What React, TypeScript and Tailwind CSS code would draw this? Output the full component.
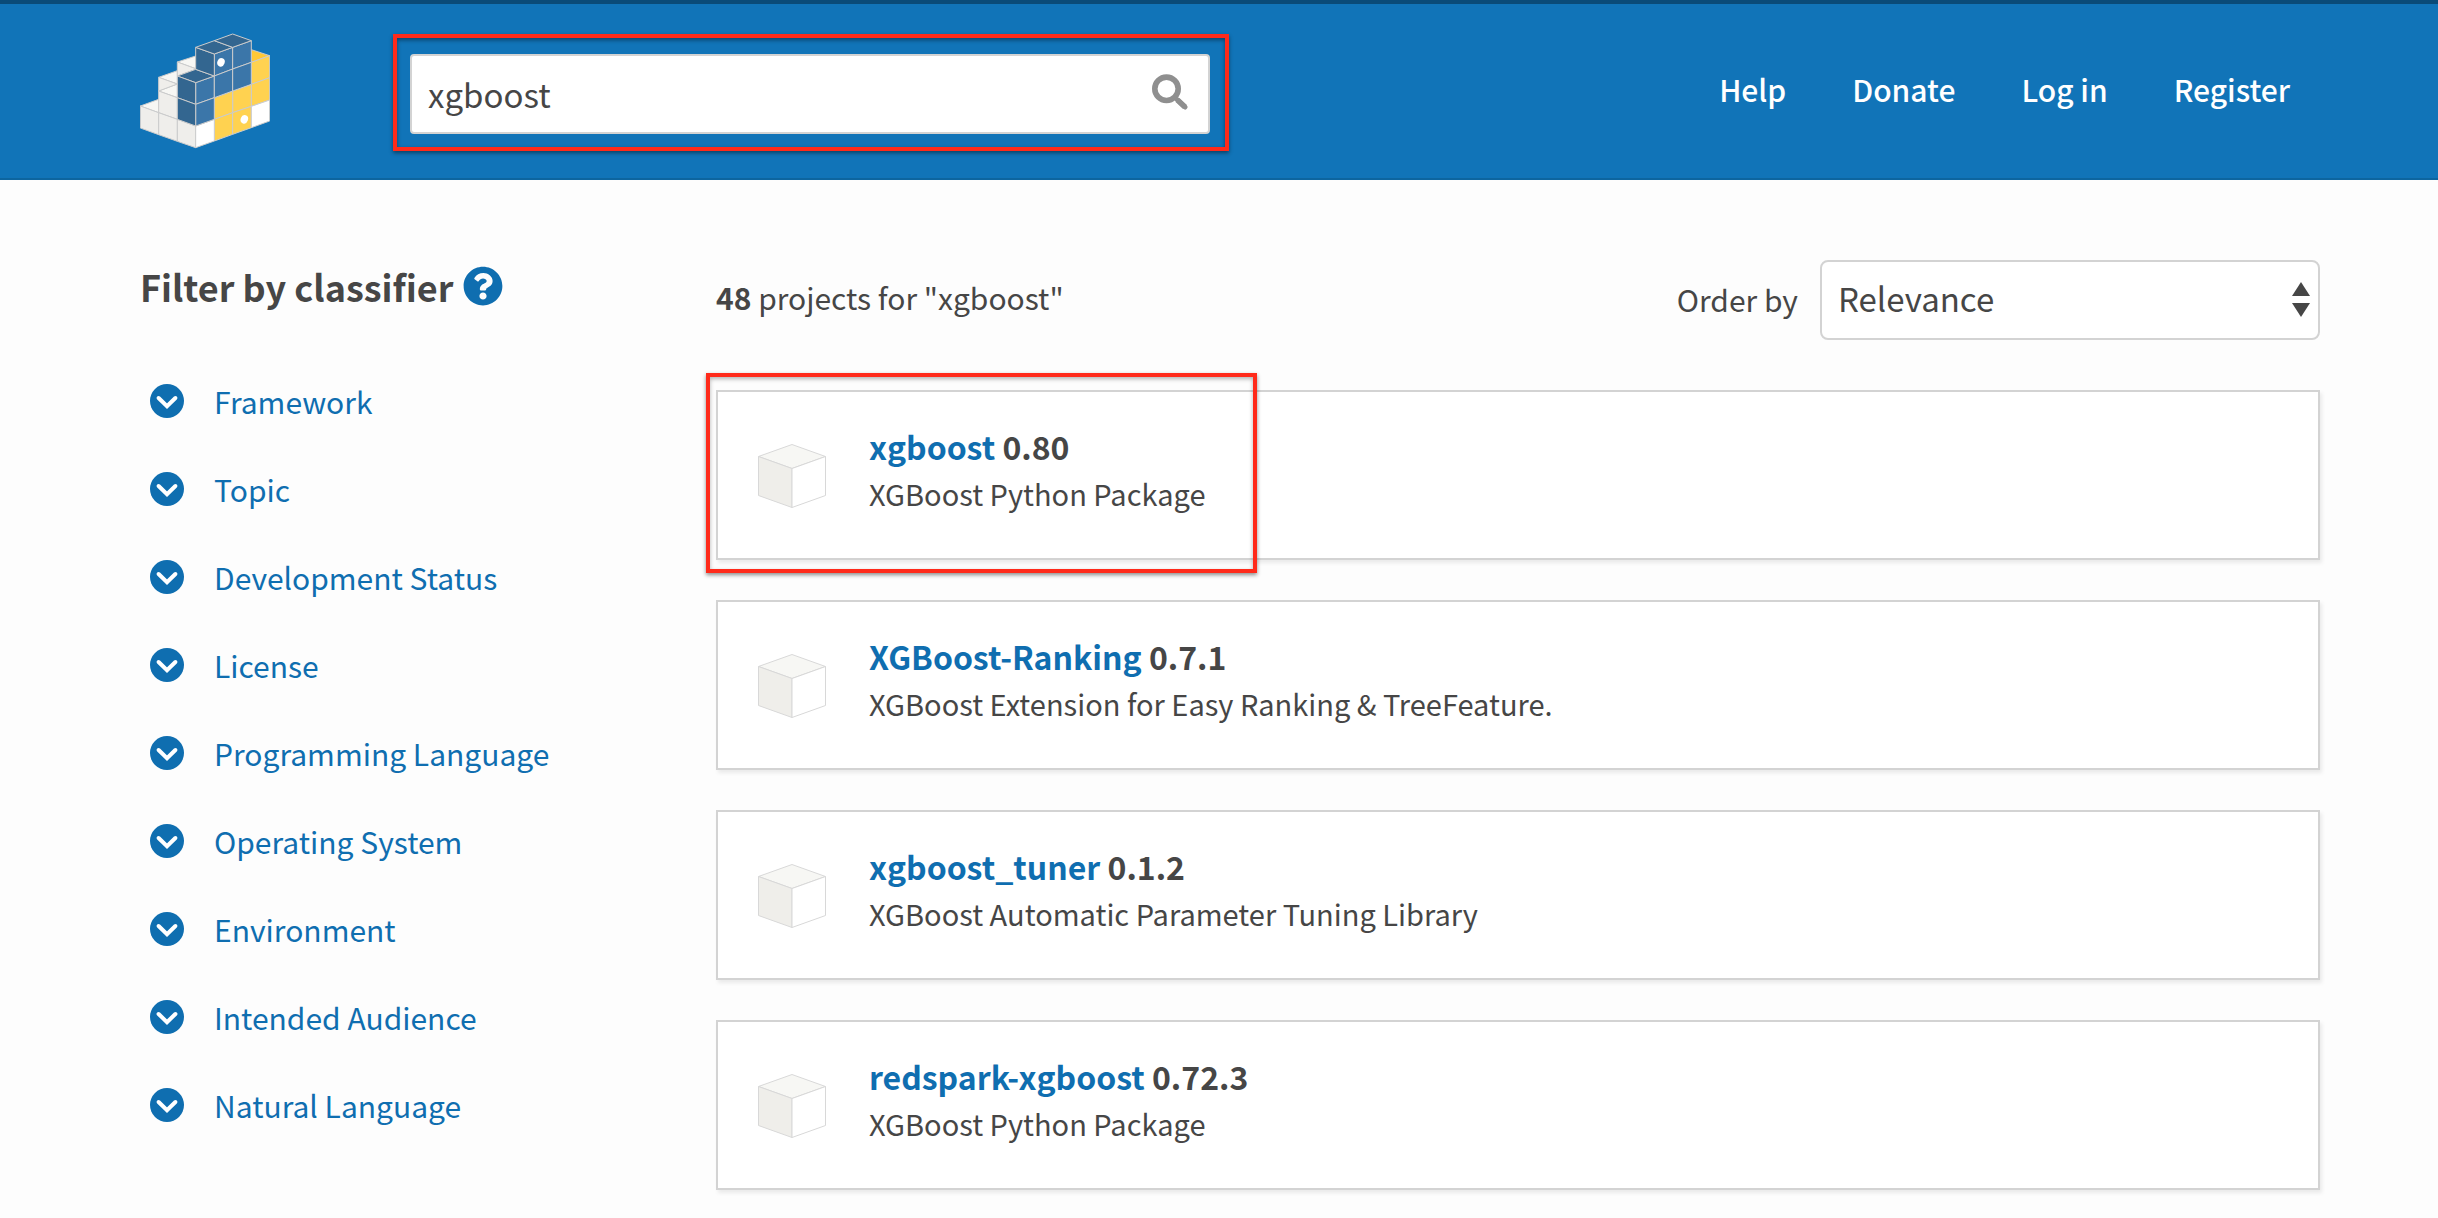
import React from "react";
import { FaQuestionCircle } from "react-icons/fa";

const navItems = ["Help", "Donate", "Log in", "Register"];

const classifiers = [
  "Framework",
  "Topic",
  "Development Status",
  "License",
  "Programming Language",
  "Operating System",
  "Environment",
  "Intended Audience",
  "Natural Language",
];

interface Project {
  name: string;
  version: string;
  description: string;
  highlighted?: boolean;
}

const projects: Project[] = [
  { name: "xgboost", version: "0.80", description: "XGBoost Python Package", highlighted: true },
  { name: "XGBoost-Ranking", version: "0.7.1", description: "XGBoost Extension for Easy Ranking & TreeFeature." },
  { name: "xgboost_tuner", version: "0.1.2", description: "XGBoost Automatic Parameter Tuning Library" },
  { name: "redspark-xgboost", version: "0.72.3", description: "XGBoost Python Package" },
];

function Logo() {
  return (
    <svg viewBox="60 99 390 348" className="h-[116px] w-[130px]" aria-hidden="true">
      <g stroke="#cccccc" strokeWidth="3" strokeLinejoin="round">
        {/* back steps */}
        <g fill="#f7f7f4">
          <path d="M172 186 227 168V206Z" />
          <path d="M116 232 172 212V252Z" />
          <path d="M116 273 172 252V293Z" />
          <path d="M61 318 116 298V338Z" />
        </g>
        <g fill="#efeeeb">
          <path d="M172 186 227 206V208L172 228Z" />
          <path d="M116 232 172 252 116 273Z" />
          <path d="M116 273 172 293V358L116 338Z" />
          <path d="M61 318 116 338V404L61 384Z" />
          <path d="M116 338 172 358V424L116 404Z" />
          <path d="M172 358 227 378V443L172 424Z" />
        </g>
        {/* yellow blocks */}
        <path d="M394 149 449 167 394 187Z" fill="#ffc836" />
        <g fill="#ffd250">
          <path d="M394 187 449 167V233L394 253Z" />
          <path d="M394 253 449 233V300L394 319Z" />
          <path d="M338 273 394 253V319L338 338Z" />
          <path d="M283 293 338 273V338L283 358Z" />
          <path d="M283 358 338 338V403L283 423Z" />
          <path d="M338 338 394 319V383L338 403Z" />
        </g>
        {/* white corners */}
        <g fill="#ffffff">
          <path d="M227 378 283 358V423L227 443Z" />
          <path d="M394 319 449 300V363L394 383Z" />
        </g>
        {/* blue blocks */}
        <g fill="#3b76a9">
          <path d="M227 248 283 228V293L227 313Z" />
          <path d="M227 313 283 293V358L227 378Z" />
          <path d="M283 162 338 142V207L283 228Z" />
          <path d="M338 142 394 122V187L338 207Z" />
          <path d="M283 228 338 207V273L283 293Z" />
          <path d="M338 207 394 187V253L338 273Z" />
        </g>
        <g fill="#336690">
          <path d="M172 228 227 208 283 228 227 248Z" />
          <path d="M172 228 227 248V313L172 293Z" />
          <path d="M172 293 227 313V378L172 358Z" />
          <path d="M227 142 283 162V228L227 208Z" />
          <path d="M227 142 283 122 338 142 283 162Z" />
          <path d="M283 122 338 102 394 122 338 142Z" />
        </g>
      </g>
      <ellipse cx="303" cy="187" rx="11" ry="13" fill="#fff" transform="rotate(20 303 187)" />
      <ellipse cx="373" cy="358" rx="11" ry="13" fill="#fff" transform="rotate(20 373 358)" />
    </svg>
  );
}

function SearchIcon() {
  return (
    <svg viewBox="0 0 36 36" className="size-9" fill="none" stroke="#8f8f8f" aria-hidden="true">
      <circle cx="14.5" cy="14.8" r="11.7" strokeWidth="5.6" />
      <path d="M25.5 26 33 33" strokeWidth="5.6" />
      <path d="M25.5 26 33 33" strokeWidth="5" strokeLinecap="round" />
    </svg>
  );
}

function ChevronIcon() {
  return (
    <svg viewBox="0 0 34 34" className="size-[34px] shrink-0" aria-hidden="true">
      <circle cx="17" cy="17" r="17" fill="#0f6eb0" />
      <path d="M8.6 14 17 22.2 25.4 14" fill="none" stroke="#fff" strokeWidth="4" strokeLinecap="round" />
    </svg>
  );
}

function PackageCube() {
  return (
    <svg viewBox="0 0 68 64" className="h-16 w-[68px] shrink-0" aria-hidden="true">
      <g stroke="#d8d8d8" strokeLinejoin="round">
        <path d="M.5 12.5 34 .5 67.5 12.5 34 24.5Z" fill="#f7f7f4" />
        <path d="M.5 12.5 34 24.5V63.5L.5 51.5Z" fill="#efeeea" />
        <path d="M67.5 12.5 34 24.5V63.5L67.5 51.5Z" fill="#fff" />
      </g>
    </svg>
  );
}

function ProjectCard({ name, version, description, highlighted }: Project) {
  return (
    <li className="relative flex min-h-[170px] items-center gap-[43px] border-2 border-[#d3d3d3] bg-white px-10 pt-0.5 shadow-[2px_3px_4px_rgba(0,0,0,0.08)]">
      <PackageCube />
      <div className="pb-3.5">
        <h3 className="text-[32px] leading-[48px] font-bold">
          <a href="#" className="text-[#0f6eb0]">{name}</a> {version}
        </h3>
        <p className="text-[29px] leading-[46px]">{description}</p>
      </div>
      {highlighted && (
        <div className="pointer-events-none absolute -top-[19px] -bottom-[15px] -left-3 w-[551px] border-4 border-[#ff2a1a] shadow-[0_2px_4px_rgba(0,0,0,0.45),inset_0_2px_4px_rgba(0,0,0,0.3)]" />
      )}
    </li>
  );
}

export default function App() {
  return (
    <div className="min-h-screen bg-[#fdfdfd] font-['Noto_Sans_CJK_SC',sans-serif] text-[#464646]">
      <header className="flex h-[180px] items-center border-t-4 border-b-2 border-t-[#0a4b78] border-b-[#0d659f] bg-[#1174b8] pr-[148px] pl-[140px]">
        <a href="#" aria-label="PyPI home">
          <Logo />
        </a>
        <form className="relative ml-[140px] w-[800px] pt-1.5" onSubmit={(e) => e.preventDefault()}>
          <input
            type="text"
            aria-label="Search projects"
            defaultValue="xgboost"
            className="block h-20 w-full rounded-sm border-2 border-[#d3d3d3] bg-white pr-20 pl-4 text-[33px] outline-none"
          />
          <button type="submit" aria-label="Search" className="absolute top-[26px] right-[22px]">
            <SearchIcon />
          </button>
          <div className="pointer-events-none absolute -top-3.5 -right-[19px] -bottom-[17px] -left-[17px] border-4 border-[#ff2a1a] shadow-[0_2px_4px_rgba(0,0,0,0.45),inset_0_2px_4px_rgba(0,0,0,0.45)]" />
        </form>
        <nav className="ml-auto flex gap-[66px] pb-1 text-[30px] leading-[44px] font-medium text-white">
          {navItems.map((item) => (
            <a key={item} href="#">{item}</a>
          ))}
        </nav>
      </header>

      <main className="flex pt-20 pr-[118px] pb-7 pl-[140px]">
        <aside className="w-[576px] shrink-0">
          <h2 className="flex h-[52px] items-center gap-2.5 text-[36px] leading-[52px] font-bold">
            Filter by classifier
            <a href="#" aria-label="Help with classifiers" className="text-[#0f6eb0]">
              <FaQuestionCircle className="size-10" />
            </a>
          </h2>
          <ul className="mt-[45px]">
            {classifiers.map((label) => (
              <li key={label}>
                <button type="button" className="flex h-[88px] items-center gap-[30px] pl-2.5 text-[30px] text-[#0f6eb0]">
                  <ChevronIcon />
                  {label}
                </button>
              </li>
            ))}
          </ul>
        </aside>

        <section className="min-w-0 flex-1">
          <div className="flex items-center justify-between">
            <p className="pb-1.5 text-[30px] leading-[44px]">
              <strong>48</strong> projects for "xgboost"
            </p>
            <div className="flex items-center gap-[22px]">
              <label htmlFor="order" className="pb-0.5 text-[30px] leading-[44px]">Order by</label>
              <div className="relative">
                <select
                  id="order"
                  className="block h-20 w-[500px] appearance-none rounded-lg border-2 border-[#d3d3d3] bg-white px-4 pb-0.5 text-[33px]"
                >
                  <option>Relevance</option>
                </select>
                <svg viewBox="0 0 18 36" className="pointer-events-none absolute top-[22px] right-2.5 h-9 w-[18px]" fill="#464646" aria-hidden="true">
                  <path d="M9 0 18 14H0Z" />
                  <path d="M9 35 18 21H0Z" />
                </svg>
              </div>
            </div>
          </div>
          <ul className="mt-[50px] flex flex-col gap-10">
            {projects.map((project) => (
              <ProjectCard key={project.name} {...project} />
            ))}
          </ul>
        </section>
      </main>
    </div>
  );
}
